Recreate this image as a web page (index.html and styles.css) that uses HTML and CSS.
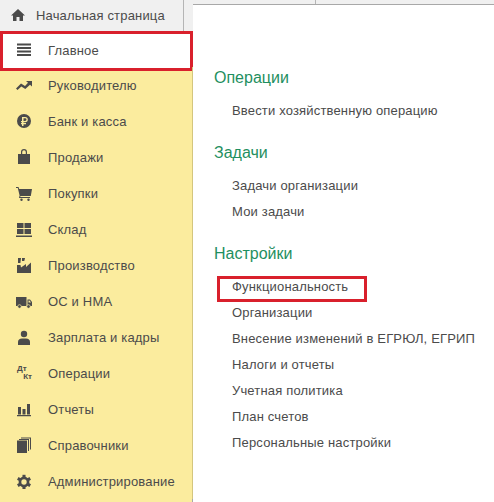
FILE: index.html
```html
<!DOCTYPE html>
<html lang="ru">
<head>
<meta charset="UTF-8">
<title>Начальная страница</title>
<link rel="stylesheet" href="styles.css">
</head>
<body>

  <div class="layout">
    <div class="side">
      <div class="home">
        <svg class="home-icon" viewBox="0 0 14 12"><path d="M7 0 L14 6.5 H12 V12 H8.5 V8 H5.5 V12 H2 V6.5 H0 Z"/></svg>
        <span>Начальная страница</span>
      </div>

      <ul class="nav">
        <li class="active">
          <svg viewBox="0 0 16 16"><path d="M1 1.500h14v2H1zM1 5h14v2H1zM1 8.500h14v2H1zM1 12h14v2H1z"/></svg>
          <span>Главное</span>
        </li>
        <li>
          <svg viewBox="0 0 16 16"><path d="M0 11.500 L5 6.500 L9 9 L12 5.700 L10 4 H16 V9.500 L14 7.700 L9.300 12 L5.300 9.500 L1.500 13 Z"/></svg>
          <span>Руководителю</span>
        </li>
        <li>
          <svg viewBox="0 0 16 16"><path fill-rule="evenodd" d="M8 1a7 7 0 1 0 0 14A7 7 0 0 0 8 1zM6 4h3.200a2.600 2.600 0 0 1 0 5.200H7.500V10H10v1.200H7.500V13H6v-1.800H5V10h1v-.8H5V8h1zM7.500 5.200V8h1.600a1.400 1.400 0 0 0 0-2.800z"/></svg>
          <span>Банк и касса</span>
        </li>
        <li>
          <svg viewBox="0 0 16 16"><path fill-rule="evenodd" d="M2 5h3V3a3 3 0 0 1 6 0v2h3v10H2zM6.200 5h3.600V3a1.800 1.800 0 0 0-3.600 0z"/></svg>
          <span>Продажи</span>
        </li>
        <li>
          <svg viewBox="0 0 16 16"><path d="M0 2h2.500l.7 2H16l-1.200 7H4.500l-.3 1H14v1H3l.6-2.500L1.800 3H0z"/><circle cx="5.500" cy="14.800" r="1.200"/><circle cx="12.500" cy="14.800" r="1.200"/></svg>
          <span>Покупки</span>
        </li>
        <li>
          <svg viewBox="0 0 16 16"><path d="M1 2h6.500v5H1zM8.500 2H15v5H8.500zM1 8h6.500v5H1zM8.500 8H15v5H8.500zM0 14.500h16V16H0z"/></svg>
          <span>Склад</span>
        </li>
        <li>
          <svg viewBox="0 0 16 16"><path d="M2 1h3l-.6 5H2zM6 1h3L8.300 4H6zM1 16V8h3.500l.5 2.500L10 7v3l5-4.500V16z"/></svg>
          <span>Производство</span>
        </li>
        <li>
          <svg viewBox="0 0 16 16"><path fill-rule="evenodd" d="M0 4h10.500v9H0zM11.500 6.500h2.500l2 2.500v4h-4.500zM12.500 7.500V9.500H15l-1.500-2z"/><circle class="wheel" cx="3.500" cy="13.500" r="1.800"/><circle class="wheel" cx="12.500" cy="13.500" r="1.800"/></svg>
          <span>ОС и НМА</span>
        </li>
        <li>
          <svg viewBox="0 0 16 16"><circle cx="8" cy="5" r="3.200"/><path d="M2 16v-3c0-2 1.500-3.500 4-3.500h4c2.500 0 4 1.500 4 3.500v3z"/></svg>
          <span>Зарплата и кадры</span>
        </li>
        <li>
          <span class="dtkt"><b>Дт</b><b>Кт</b></span>
          <span>Операции</span>
        </li>
        <li>
          <svg viewBox="0 0 16 16"><path d="M2 6h3v7.500H2zM6.500 8h3v5.500h-3zM11 3h3v10.500h-3zM1 14h14v1.200H1z"/></svg>
          <span>Отчеты</span>
        </li>
        <li>
          <svg viewBox="0 0 16 16"><path d="M1 3.500h10V16H1zM3 2h10v12h-1V3H3zM5 .5h10v12h-1v-11H5z"/></svg>
          <span>Справочники</span>
        </li>
        <li>
          <svg viewBox="0 0 16 16">
            <g transform="translate(.8 1.800) scale(.9)">
              <circle cx="8" cy="8" r="4.500" fill="none" stroke="#4b4b4b" stroke-width="3"/>
              <path d="M6.300 0h3.400v16H6.300z"/>
              <path d="M6.300 0h3.400v16H6.300z" transform="rotate(60 8 8)"/>
              <path d="M6.300 0h3.400v16H6.300z" transform="rotate(120 8 8)"/>
              <circle cx="8" cy="8" r="3" class="gear-hole"/>
            </g>
          </svg>
          <span>Администрирование</span>
        </li>
      </ul>
    </div>

    <div class="right">
      <div class="strip"><div class="strip-tab"></div></div>
      <div class="panel">
        <h3>Операции</h3>
        <ul class="links">
          <li>Ввести хозяйственную операцию</li>
        </ul>
        <h3>Задачи</h3>
        <ul class="links">
          <li>Задачи организации</li>
          <li>Мои задачи</li>
        </ul>
        <h3>Настройки</h3>
        <ul class="links">
          <li class="marked">Функциональность</li>
          <li>Организации</li>
          <li>Внесение изменений в ЕГРЮЛ, ЕГРИП</li>
          <li>Налоги и отчеты</li>
          <li>Учетная политика</li>
          <li>План счетов</li>
          <li>Персональные настройки</li>
        </ul>
      </div>
    </div>
  </div>

</body>
</html>
```

FILE: styles.css
```css
html, body { margin: 0; height: 100%; }
body { font-family: "Liberation Sans", Arial, sans-serif; font-size: 13px; letter-spacing: .17px; color: #4b4b4b; background: #fff; overflow: hidden; }
ul { list-style: none; margin: 0; padding: 0; }

.layout { display: flex; height: 502px; }

.side { width: 193px; flex: none; display: flex; flex-direction: column; background: #fbec9e; }
.home { height: 31px; box-sizing: border-box; width: 184px; display: flex; align-items: center; gap: 11px; padding: 0 0 1px 11px; background: #f0f0f0; border-right: 1px solid #b5b5b5; position: relative; }
.home::after { content: ""; position: absolute; top: 0; bottom: 0; left: 184px; width: 9px; background: #f0f0f0; }
.home-icon { width: 14px; height: 12px; fill: #4b4b4b; flex: none; }

.nav { position: relative; z-index: 1; }
.nav li { height: 36px; display: flex; align-items: center; box-sizing: border-box; padding-left: 16px; gap: 16px; border-right: 1px solid #d4c67e; }
.nav svg { width: 16px; height: 16px; fill: #4b4b4b; flex: none; }
.nav li.active { height: 40px; background: #fff; border: 3px solid #d9202c; padding: 0 0 2px 13px; margin-bottom: -4px; }
.gear-hole { fill: #fbec9e; }
.wheel { stroke: #fbec9e; stroke-width: .7; }

.dtkt { width: 15px; height: 16px; padding-left: 1px; flex: none; display: flex; flex-direction: column; font-size: 8px; line-height: 8px; letter-spacing: 0; }
.dtkt b:last-child { align-self: flex-end; }

.right { flex: 1; display: flex; flex-direction: column; margin-left: -1px; background: #f0f0f0; }
.strip { height: 4px; flex: none; }
.strip-tab { width: 123px; height: 4px; border-right: 1px solid #b5b5b5; }
.panel { flex: 1; background: #fff; border-top: 1px solid #a8a8a8; border-left: 1px solid #a8a8a8; padding: 63px 0 0 21px; }

h3 { margin: 0 0 10px; font-size: 16px; font-weight: normal; line-height: 20px; letter-spacing: 0; color: #1f8f5f; }
.links { margin: 0 0 19px; padding-left: 18px; }
.links li { height: 26px; line-height: 26px; }
.links li.marked { position: relative; }
.links li.marked::after { content: ""; position: absolute; left: -15px; top: 2px; width: 150px; height: 26px; box-sizing: border-box; border: 3px solid #d9202c; }
```
